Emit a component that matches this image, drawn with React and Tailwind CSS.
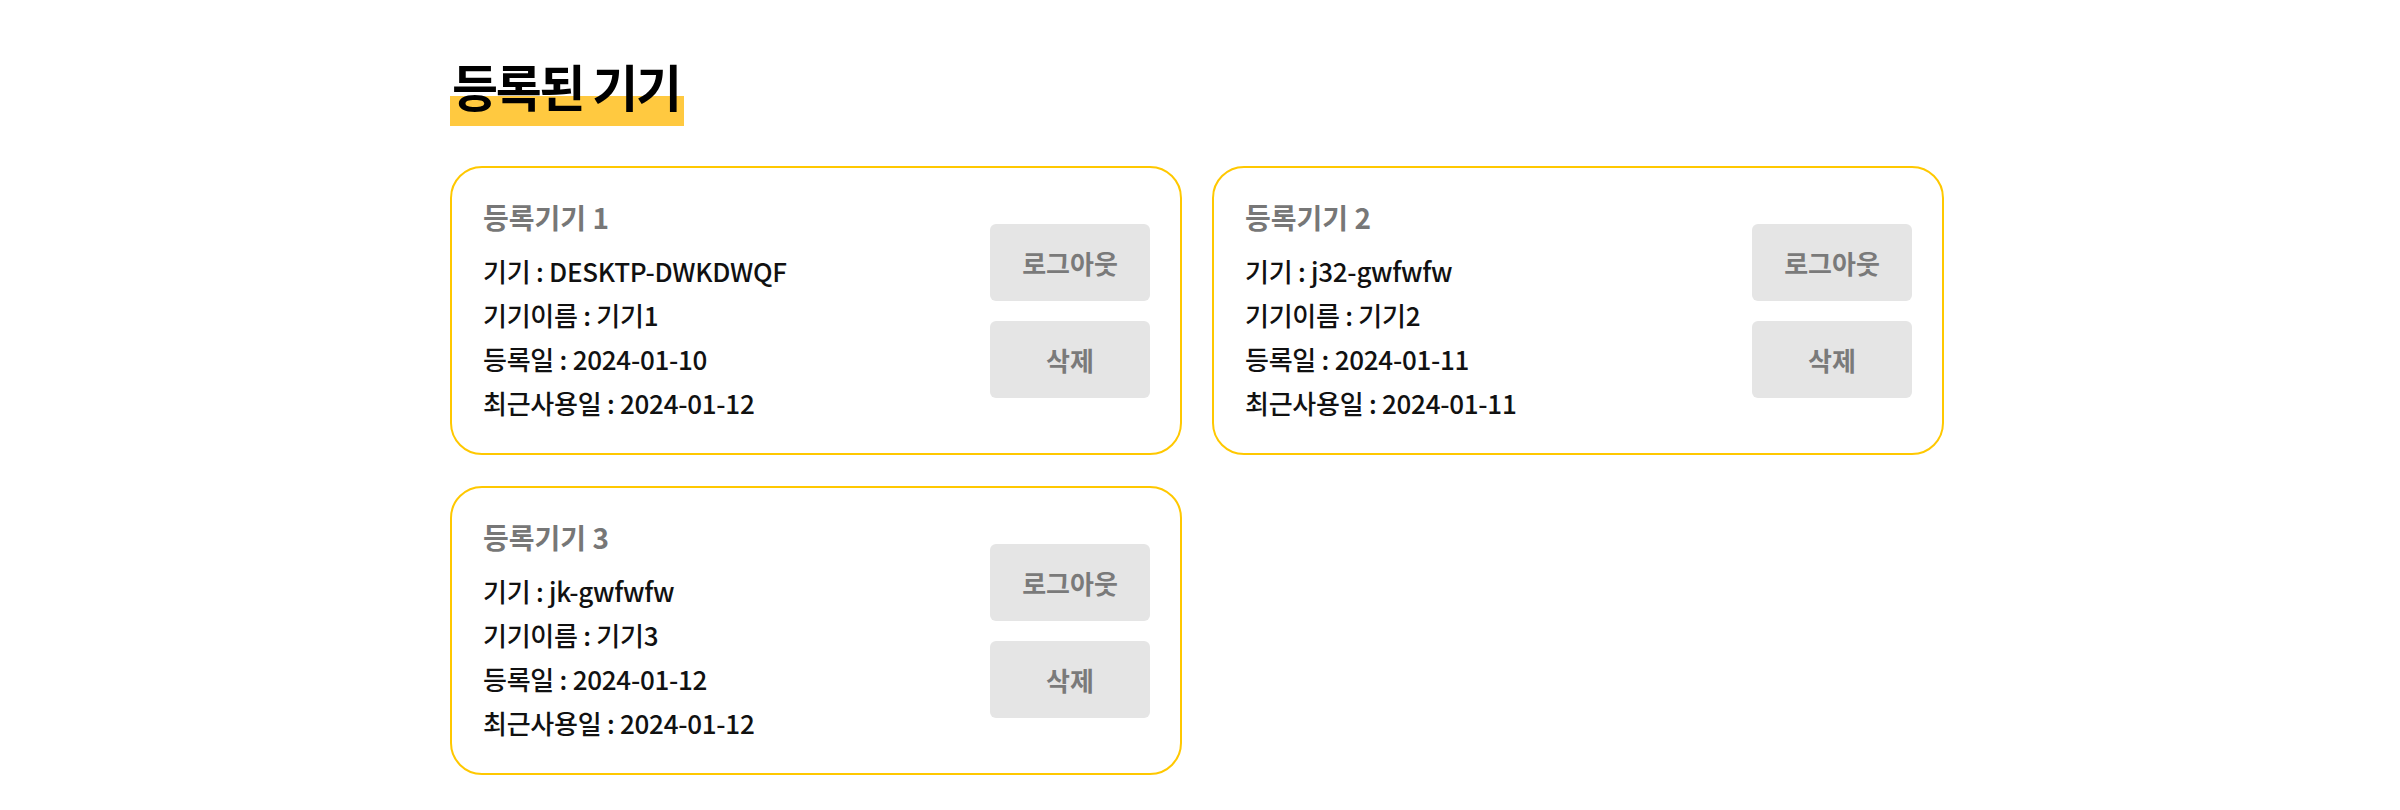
import React from "react";

const devices = [
  { n: 1, device: "DESKTP-DWKDWQF", name: "기기1", reg: "2024-01-10", last: "2024-01-12" },
  { n: 2, device: "j32-gwfwfw", name: "기기2", reg: "2024-01-11", last: "2024-01-11" },
  { n: 3, device: "jk-gwfwfw", name: "기기3", reg: "2024-01-12", last: "2024-01-12" },
];

function Card({ d }) {
  return (
    <div className="flex h-[289px] justify-between rounded-[32px] border-2 border-[#ffc800] bg-white pl-[31px] pr-[30px] pt-[31px] pb-[27px]">
      <div className="flex flex-col">
        <div className="text-[28px] font-bold leading-[36px] text-[#777777]">등록기기 {d.n}</div>
        <div className="mt-[14px] text-[26px] font-medium leading-[44px] tracking-[-0.01em] text-[#111111]">
          <div>기기 : {d.device}</div>
          <div>기기이름 : {d.name}</div>
          <div>등록일 : {d.reg}</div>
          <div>최근사용일 : {d.last}</div>
        </div>
      </div>
      <div className="mb-[3px] flex flex-col gap-[20px] self-center">
        <button className="flex h-[77px] w-[160px] items-center justify-center rounded-[6px] bg-[#e5e5e5] text-[26px] font-bold text-[#7a7a7a]">
          로그아웃
        </button>
        <button className="flex h-[77px] w-[160px] items-center justify-center rounded-[6px] bg-[#e5e5e5] text-[26px] font-bold text-[#7a7a7a]">
          삭제
        </button>
      </div>
    </div>
  );
}

export default function App() {
  return (
    <div
      className="min-h-[810px] w-full bg-white pt-[60px]"
      style={{ fontFamily: '"Noto Sans CJK KR", "Noto Sans", sans-serif' }}
    >
      <div className="ml-[450px] w-[1492px]">
        <h1 className="m-0 flex">
          <span className="inline-block pl-[2px] pr-[4px] pb-[16px] text-[50px] font-bold leading-[50px] tracking-[-0.045em] text-black bg-[linear-gradient(to_bottom,transparent_36px,#ffc940_36px)]">
            등록된 기기
          </span>
        </h1>
        <div className="mt-[40px] grid grid-cols-[732px_732px] gap-x-[30px] gap-y-[31px]">
          {devices.map((d) => (
            <Card key={d.n} d={d} />
          ))}
        </div>
      </div>
    </div>
  );
}
